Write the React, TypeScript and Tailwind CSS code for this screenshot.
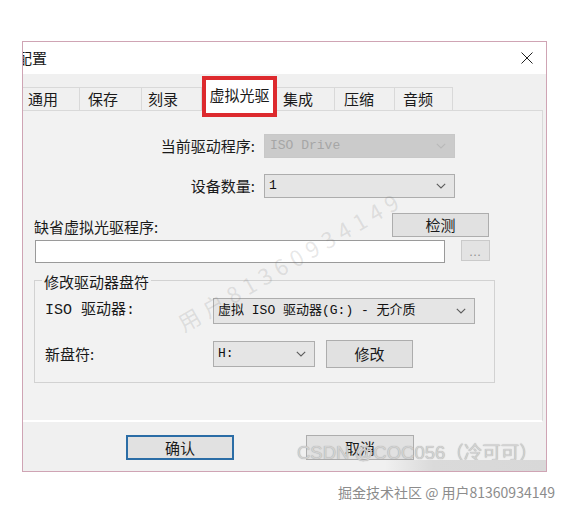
import React from 'react';

// Small "v" arrow used in the combo boxes
const Chevron: React.FC<{ color?: string }> = ({ color = '#555' }) => (
  <svg width="10" height="6" viewBox="0 0 10 6" fill="none">
    <path d="M0.8 0.8 L5 5 L9.2 0.8" stroke={color} strokeWidth="1.1" />
  </svg>
);

type ComboProps = {
  value: string;
  className: string;
  disabled?: boolean;
};

const Combo: React.FC<ComboProps> = ({ value, className, disabled }) => (
  <div
    className={
      disabled
        ? `flex items-center justify-between border border-[#c8c8c8] bg-[#cbcbcb] pl-[5px] pr-[8px] text-[#a6a6a6] ${className}`
        : `flex items-center justify-between border border-[#adadad] bg-[#e5e5e5] pl-[4px] pr-[8px] text-[#111] ${className}`
    }
  >
    <span className="whitespace-nowrap text-[13px] leading-[20px] [font-family:'Liberation_Mono','Noto_Sans_CJK_SC',monospace]">
      {value}
    </span>
    <Chevron color={disabled ? '#b9b9b9' : '#5c5c5c'} />
  </div>
);

const tabs = [
  { label: '通用', w: 'w-[57px] pl-[5px]' },
  { label: '保存', w: 'w-[62px] pl-[8px]' },
  { label: '刻录', w: 'w-[60px] pl-[6px]' },
];
const tabsRight = [
  { label: '集成', w: 'w-[58px] pl-[6px]' },
  { label: '压缩', w: 'w-[60px] pl-[9px]' },
  { label: '音频', w: 'w-[58px] pl-[8px]' },
];

export default function App() {
  return (
    <div className="relative h-[514px] w-[570px] overflow-hidden bg-white text-[15px] text-[#1a1a1a] [font-family:'Noto_Sans_CJK_SC',sans-serif]">
      {/* Dialog */}
      <div className="ml-[22px] mt-[41px] flex h-[431px] w-[525px] flex-col overflow-hidden border border-[#cfa4b4] bg-[#f0f0f0]">
        {/* Title bar */}
        <div className="flex h-[32px] shrink-0 items-center justify-between bg-white pr-[13px]">
          <span className="-ml-[6px] leading-[20px]">配置</span>
          <svg width="12" height="12" viewBox="0 0 12 12" fill="none">
            <path d="M0.5 0.5 L11.5 11.5 M11.5 0.5 L0.5 11.5" stroke="#222" strokeWidth="1" />
          </svg>
        </div>

        {/* Tabs */}
        <div className="flex h-[36px] shrink-0 items-end">
          {tabs.map(t => (
            <div
              key={t.label}
              className={`flex h-[23px] items-center border-t border-r border-[#d9d9d9] bg-[#f0f0f0] leading-[20px] ${t.w}`}
            >
              {t.label}
            </div>
          ))}
          <div className="relative z-10 -mb-[7px] flex h-[41px] w-[75px] items-center justify-center border-[4px] border-[#dd2a2e] bg-white pb-[3px] leading-[20px]">
            虚拟光驱
          </div>
          {tabsRight.map(t => (
            <div
              key={t.label}
              className={`flex h-[23px] items-center border-t border-r border-[#d9d9d9] bg-[#f0f0f0] leading-[20px] ${t.w}`}
            >
              {t.label}
            </div>
          ))}
        </div>

        {/* Tab page */}
        <div className="h-[312px] w-[520px] shrink-0 border-t border-r border-b-2 border-t-[#d9d9d9] border-r-[#d9d9d9] border-b-white bg-[#f2f2f2] pt-[23px]">
          <div className="flex h-[24px] items-center">
            <span className="w-[232px] text-right leading-[20px]">当前驱动程序:</span>
            <Combo value="ISO Drive" disabled className="ml-[9px] h-[24px] w-[191px]" />
          </div>

          <div className="mt-[16px] flex h-[24px] items-center">
            <span className="w-[232px] text-right leading-[20px]">设备数量:</span>
            <Combo value="1" className="ml-[9px] h-[24px] w-[191px]" />
          </div>

          <div className="mt-[15px] flex h-[24px] items-end justify-between pl-[11px] pr-[53px]">
            <span className="leading-[20px]">缺省虚拟光驱程序:</span>
            <button className="h-[24px] w-[97px] border border-[#adadad] bg-[#e1e1e1] leading-[20px]">
              检测
            </button>
          </div>

          <div className="mt-[3px] flex items-start pl-[12px]">
            <div className="h-[23px] w-[410px] border border-[#9a9a9a] bg-white" />
            <button className="ml-[16px] flex h-[21px] w-[29px] items-center justify-center border border-[#cacaca] bg-[#e3e3e3] text-[11px] leading-[12px] tracking-[1px] text-[#8f8f8f]">
              ...
            </button>
          </div>

          {/* Group box */}
          <div className="ml-[11px] mt-[17px] h-[103px] w-[461px] border border-[#d2d2d2]">
            <span className="-mt-[8px] ml-[7px] block w-fit bg-[#f2f2f2] px-[2px] leading-[18px]">
              修改驱动器盘符
            </span>

            <div className="mt-[7px] flex h-[26px] items-center pl-[10px]">
              <span className="w-[168px] leading-[20px] [font-family:'Liberation_Mono','Noto_Sans_CJK_SC',monospace]">
                ISO 驱动器:
              </span>
              <Combo value="虚拟 ISO 驱动器(G:) - 无介质" className="h-[26px] w-[262px]" />
            </div>

            <div className="mt-[16px] flex h-[28px] items-center pl-[10px]">
              <span className="w-[168px] leading-[20px]">新盘符:</span>
              <Combo value="H:" className="h-[26px] w-[102px]" />
              <button className="ml-[11px] h-[28px] w-[87px] border border-[#adadad] bg-[#e1e1e1] leading-[20px]">
                修改
              </button>
            </div>
          </div>
        </div>

        {/* Dialog buttons */}
        <div className="mt-[13px] flex gap-[72px] pl-[103px]">
          <button className="h-[25px] w-[108px] border-2 border-[#2b6da6] bg-[#e1e1e1] leading-[20px]">
            确认
          </button>
          <button className="h-[25px] w-[108px] border border-[#adadad] bg-[#e1e1e1] leading-[20px]">
            取消
          </button>
        </div>
      </div>

      {/* Site footer credit */}
      <div className="mt-[10px] pr-[15px] text-right text-[14px] leading-[20px] text-[#8c8c8c]">
        掘金技术社区 @ 用户81360934149
      </div>

      {/* Watermarks over the screenshot */}
      <div className="pointer-events-none absolute left-[290px] top-[260px] -translate-x-1/2 -translate-y-1/2 -rotate-[30deg] whitespace-nowrap text-[22px] leading-[26px] tracking-[6px] text-[rgba(110,110,110,0.17)]">
        用户81360934149
      </div>
      <div className="pointer-events-none absolute left-[297px] top-[441px] whitespace-nowrap text-[18.5px] leading-[24px] text-[#d2d2d2] [font-family:'Liberation_Sans','Noto_Sans_CJK_SC',sans-serif] [text-shadow:0_0_1px_#9c9c9c]">
        CSDN @COC056（冷可可）
      </div>
      <div className="pointer-events-none absolute left-[385px] top-[460px] h-[11px] w-[161px] bg-linear-to-r from-transparent via-[#dadada] via-30% to-[#d8d8d8]" />
    </div>
  );
}
